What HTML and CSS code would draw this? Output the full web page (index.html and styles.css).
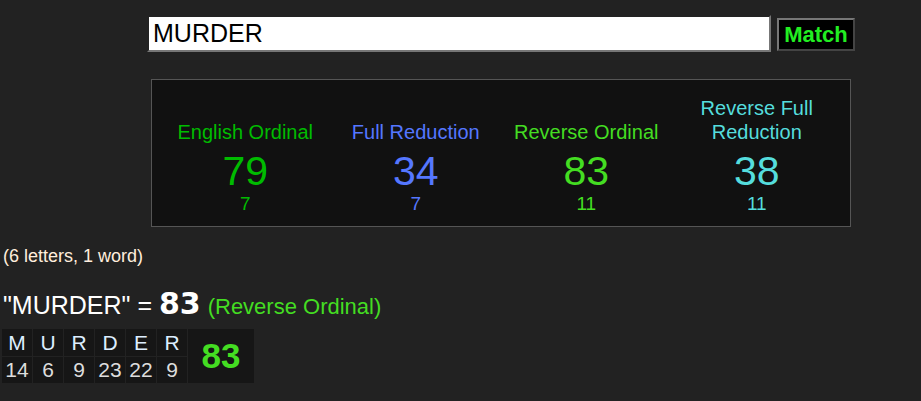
FILE: index.html
```html
<!DOCTYPE html>
<html lang="en">

<head>
    <meta charset="UTF-8">
    <meta name="viewport" content="width=device-width, initial-scale=1.0">
    <title>Gematria</title>
    <link rel="stylesheet" href="styles.css">
</head>

<body>
    <div class="search">
        <input class="search-input" type="text" value="MURDER">
        <button class="match-btn">Match</button>
    </div>

    <div class="panel">
        <div class="cipher eng">
            <div class="cipher-name">English Ordinal</div>
            <div class="cipher-value">79</div>
            <div class="cipher-sub">7</div>
        </div>
        <div class="cipher full">
            <div class="cipher-name">Full Reduction</div>
            <div class="cipher-value">34</div>
            <div class="cipher-sub">7</div>
        </div>
        <div class="cipher rev">
            <div class="cipher-name">Reverse Ordinal</div>
            <div class="cipher-value">83</div>
            <div class="cipher-sub">11</div>
        </div>
        <div class="cipher revfull">
            <div class="cipher-name">Reverse Full<br>Reduction</div>
            <div class="cipher-value">38</div>
            <div class="cipher-sub">11</div>
        </div>
    </div>

    <div class="count">(6 letters, 1 word)</div>

    <div class="result">"MURDER" = <b class="result-num">83</b> <span class="result-name">(Reverse Ordinal)</span></div>

    <table class="breakdown">
        <tr>
            <td class="letter">M</td>
            <td class="letter">U</td>
            <td class="letter">R</td>
            <td class="letter">D</td>
            <td class="letter">E</td>
            <td class="letter">R</td>
            <td class="total" rowspan="2">83</td>
        </tr>
        <tr>
            <td class="num">14</td>
            <td class="num">6</td>
            <td class="num">9</td>
            <td class="num">23</td>
            <td class="num">22</td>
            <td class="num">9</td>
        </tr>
    </table>
</body>

</html>
```

FILE: styles.css
```css
body {
    margin: 0;
    padding: 0 3px;
    background-color: #222222;
    font-family: "Liberation Sans", Arial, sans-serif;
    color: #ffffff;
}

.search {
    display: flex;
    align-items: center;
    gap: 6px;
    margin-left: 144px;
    padding-top: 15px;
}

.search-input {
    box-sizing: border-box;
    width: 624px;
    height: 37px;
    border: 2px solid #777;
    border-style: inset;
    padding: 0 4px;
    font-family: "Liberation Sans", Arial, sans-serif;
    font-size: 25px;
    color: #000;
    background: #fff;
    outline: none;
}

.match-btn {
    box-sizing: border-box;
    width: 78px;
    height: 33px;
    margin-top: 2px;
    background-color: #000;
    border: 2px solid;
    border-color: #777 #444 #444 #777;
    color: #22ee22;
    font-family: "Liberation Sans", Arial, sans-serif;
    font-weight: bold;
    font-size: 22px;
    padding: 0;
}

.panel {
    box-sizing: border-box;
    display: flex;
    align-items: flex-end;
    width: 700px;
    height: 148px;
    margin: 27px 0 0 148px;
    padding: 0 8px 12px;
    background-color: #111111;
    border: 1px solid #555;
}

.cipher {
    flex: 1;
    text-align: center;
}

.cipher-name {
    font-size: 20px;
    line-height: 24px;
}

.cipher-value {
    font-size: 41px;
    line-height: 46px;
    margin-top: 4px;
}

.cipher-sub {
    font-size: 19px;
    line-height: 20px;
}

.eng {
    color: #00bb00;
}

.full {
    color: #5577ff;
}

.rev {
    color: #44dd22;
}

.revfull {
    color: #55dddd;
}

.count {
    margin-top: 19px;
    font-size: 18px;
    color: #ffeedd;
}

.result {
    margin-top: 19px;
    font-size: 25px;
}

.result-num {
    font-size: 30px;
    font-family: "DejaVu Sans", sans-serif;
}

.result-name {
    font-size: 22px;
    color: #44dd22;
}

.breakdown {
    margin: 7px 0 0 -2px;
    border-collapse: collapse;
    background-color: #161616;
}

.breakdown td {
    border: 1px solid #222;
    text-align: center;
    padding: 0;
}

.letter {
    width: 30px;
    height: 27px;
    padding-bottom: 2px;
    font-size: 21px;
    color: #ddeeff;
}

.num {
    height: 26px;
    font-size: 21px;
    color: #dddddd;
}

.total {
    width: 66px;
    font-size: 35px;
    font-weight: bold;
    color: #44dd22;
}
```
